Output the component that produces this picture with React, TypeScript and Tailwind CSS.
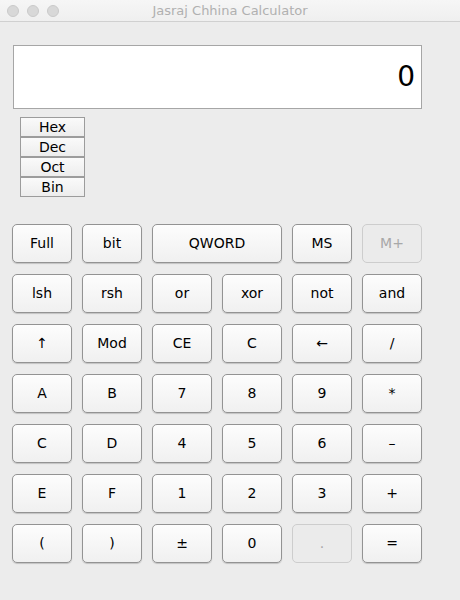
const rows: { label: string; span?: boolean; disabled?: boolean }[][] = [
  [{ label: "Full" }, { label: "bit" }, { label: "QWORD", span: true }, { label: "MS" }, { label: "M+", disabled: true }],
  [{ label: "lsh" }, { label: "rsh" }, { label: "or" }, { label: "xor" }, { label: "not" }, { label: "and" }],
  [{ label: "↑" }, { label: "Mod" }, { label: "CE" }, { label: "C" }, { label: "←" }, { label: "/" }],
  [{ label: "A" }, { label: "B" }, { label: "7" }, { label: "8" }, { label: "9" }, { label: "*" }],
  [{ label: "C" }, { label: "D" }, { label: "4" }, { label: "5" }, { label: "6" }, { label: "–" }],
  [{ label: "E" }, { label: "F" }, { label: "1" }, { label: "2" }, { label: "3" }, { label: "+" }],
  [{ label: "(" }, { label: ")" }, { label: "±" }, { label: "0" }, { label: ".", disabled: true }, { label: "=" }],
];

const bases = ["Hex", "Dec", "Oct", "Bin"];

export default function App() {
  return (
    <div className="w-[460px] h-[600px] bg-[#ececec] font-['DejaVu_Sans',sans-serif] text-black overflow-hidden">
      {/* title bar */}
      <div className="relative flex h-[22px] items-center justify-center border-b border-[#d0d0d0] bg-gradient-to-b from-[#f6f6f6] to-[#efefef]">
        <div className="absolute left-[7px] top-[5px] flex gap-[8px]">
          {[1, 2, 3].map((i) => (
            <div key={i} className="h-[12px] w-[12px] rounded-full border border-[#cacaca] bg-[#d8d8d8]" />
          ))}
        </div>
        <span className="text-[13px] text-[#b0b0b0]">Jasraj Chhina Calculator</span>
      </div>

      <div className="pl-[13px] pt-[23px]">
        <div className="flex h-[64px] w-[409px] items-center justify-end border border-[#a6a6a6] bg-white pr-[6px]">
          <span className="text-[28px] leading-none">0</span>
        </div>

        <div className="ml-[7px] mt-[8px] flex w-[65px] flex-col">
          {bases.map((b) => (
            <div
              key={b}
              className="flex h-[20px] items-center justify-center border border-[#9c9c9c] bg-gradient-to-b from-[#fafafa] to-[#ededed] text-[14px] leading-none"
            >
              {b}
            </div>
          ))}
        </div>
      </div>

      <div className="ml-[12px] mt-[27px] grid w-[410px] grid-cols-[repeat(6,60px)] gap-x-[10px] gap-y-[11px]">
        {rows.flat().map((b, i) => (
          <div
            key={i}
            className={
              "flex h-[39px] items-center justify-center rounded-[5px] border text-[14px] " +
              (b.span ? "col-span-2 " : "") +
              (b.disabled
                ? "border-[#cdcdcd] bg-[#ebebeb] text-[#a8a8a8]"
                : "border-[#939393] bg-gradient-to-b from-[#fdfdfd] to-[#f0f0f0] shadow-[0_1px_1px_rgba(0,0,0,0.18)]")
            }
          >
            {b.label}
          </div>
        ))}
      </div>
    </div>
  );
}
